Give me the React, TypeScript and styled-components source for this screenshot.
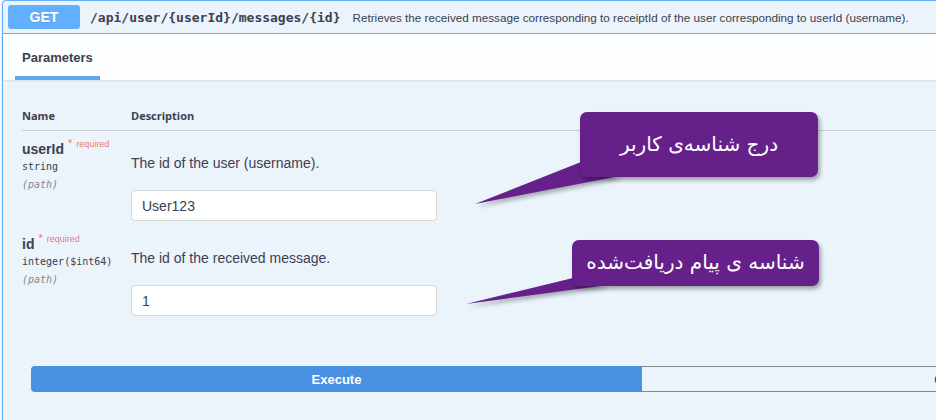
import React from "react";
import styled, { createGlobalStyle } from "styled-components";

const GlobalStyle = createGlobalStyle`
  html, body { margin: 0; padding: 0; background: #ffffff; overflow: hidden; }
  * { box-sizing: border-box; }
`;

const Page = styled.div`
  position: relative;
  width: 936px;
  height: 420px;
  overflow: hidden;
  background: #ffffff;
  font-family: "Liberation Sans", Arial, sans-serif;
  color: #3b4151;
`;

const Opblock = styled.div`
  margin-left: 2px;
  width: 1300px;
  height: 440px;
  border: 1px solid #61affe;
  border-radius: 4px;
  background: #ebf3fb;
  box-shadow: 0 0 3px rgba(0, 0, 0, 0.19);
`;

const Summary = styled.div`
  display: flex;
  align-items: center;
  height: 33px;
  padding-left: 5px;
  border-bottom: 1px solid #61affe;
`;

const Method = styled.span`
  display: flex;
  align-items: center;
  justify-content: center;
  width: 72px;
  height: 24px;
  border-radius: 3px;
  background: #61affe;
  color: #ffffff;
  font-weight: 700;
  font-size: 14px;
  text-shadow: 0 1px 0 rgba(0, 0, 0, 0.1);
`;

const Path = styled.span`
  margin-left: 10px;
  font-family: "DejaVu Sans Mono", monospace;
  font-weight: 700;
  font-size: 13px;
  color: #3b4151;
`;

const SummaryDesc = styled.span`
  margin-left: 12px;
  font-size: 11.7px;
  color: #3b4151;
`;

const TabBar = styled.div`
  display: flex;
  align-items: flex-end;
  height: 46px;
  padding-left: 12px;
  background: rgba(255, 255, 255, 0.85);
  box-shadow: 0 1px 2px rgba(0, 0, 0, 0.1);
`;

const Tab = styled.div`
  padding: 0 7px 10px;
  font-size: 13px;
  font-weight: 700;
  color: #3b4151;
  border-bottom: 4px solid #61a8ec;
  line-height: 16px;
`;

const Body = styled.div`
  padding: 20px 0 0 19px;
`;

const Table = styled.div`
  display: grid;
  grid-template-columns: 109px 1fr;
`;

const HeadCell = styled.div`
  height: 31px;
  padding-top: 9px;
  font-family: "Open Sans", sans-serif;
  font-size: 11px;
  line-height: 14px;
  font-weight: 700;
  color: #3b4151;
  border-bottom: 1px solid #c7cfd9;
`;

const NameCell = styled.div`
  padding: 9px 0 5px;
  display: flex;
  flex-direction: column;
`;

const DescCell = styled.div`
  padding: 9px 0 5px;
  display: flex;
  flex-direction: column;
  align-items: flex-start;
`;

const ParamName = styled.div`
  font-size: 14px;
  font-weight: 700;
  line-height: 18px;
  color: #3b4151;
  display: flex;
  align-items: flex-start;
`;

const Required = styled.span`
  margin-left: 4px;
  font-size: 9px;
  line-height: 12px;
  font-weight: 400;
  color: rgba(240, 30, 30, 0.65);
  margin-top: -3px;
`;

const Star = styled.span`
  font-size: 11px;
  margin-right: 4px;
`;

const ParamType = styled.div`
  font-family: "DejaVu Sans Mono", monospace;
  font-size: 10px;
  line-height: 18px;
  color: #3b4151;
`;

const ParamIn = styled.div`
  font-family: "DejaVu Sans Mono", monospace;
  font-style: italic;
  font-size: 10px;
  line-height: 18px;
  color: #888888;
`;

const DescText = styled.div`
  margin-top: 14px;
  font-size: 14px;
  line-height: 18px;
  color: #3b4151;
`;

const Input = styled.input`
  margin-top: 18px;
  width: 306px;
  height: 31px;
  padding: 0 10px;
  border: 1px solid #d9d9d9;
  border-radius: 4px;
  background: #ffffff;
  font-family: "Liberation Sans", Arial, sans-serif;
  font-size: 14px;
  color: #3b4151;
  outline: none;
  box-shadow: 0 0 1px rgba(0, 0, 0, 0.05);
`;

const ExecuteWrapper = styled.div`
  margin-top: 45px;
  padding-left: 9px;
  display: flex;
`;

const ExecuteBtn = styled.button`
  width: 611px;
  height: 26px;
  border: none;
  border-radius: 4px 0 0 4px;
  background: #4990e2;
  color: #ffffff;
  font-family: "Liberation Sans", Arial, sans-serif;
  font-weight: 700;
  font-size: 13px;
`;

const CancelBtn = styled.button`
  width: 628px;
  height: 26px;
  border: 1px solid #888888;
  border-left: none;
  border-radius: 0 4px 4px 0;
  background: transparent;
  color: #3b4151;
  font-family: "Liberation Sans", Arial, sans-serif;
  font-weight: 700;
  font-size: 13px;
`;

const Callout = styled.div<{ $left: number; $top: number }>`
  position: absolute;
  left: ${(p) => p.$left}px;
  top: ${(p) => p.$top}px;
`;

const Bubble = styled.div<{ $w: number; $h: number }>`
  position: relative;
  width: ${(p) => p.$w}px;
  height: ${(p) => p.$h}px;
  border-radius: 7px;
  background: #652189;
  box-shadow: 2px 3px 4px rgba(0, 0, 0, 0.35);
  color: #ffffff;
  display: flex;
  align-items: center;
  justify-content: center;
  padding-bottom: 2px;
  font-family: "DejaVu Sans", sans-serif;
  font-size: 20px;
  direction: rtl;
  z-index: 1;
`;

const Tail = styled.svg`
  position: absolute;
  overflow: visible;
  filter: drop-shadow(2px 3px 2px rgba(0, 0, 0, 0.3));
  z-index: 0;
`;

type CalloutProps = {
  left: number;
  top: number;
  w: number;
  h: number;
  text: string;
  tail: string;
};

const SpeechCallout = ({ left, top, w, h, text, tail }: CalloutProps) => (
  <Callout $left={left} $top={top}>
    <Tail width="1" height="1" style={{ left: 0, top: 0 }}>
      <polygon points={tail} fill="#652189" />
    </Tail>
    <Bubble $w={w} $h={h}>{text}</Bubble>
  </Callout>
);

export default function App() {
  return (
    <>
      <GlobalStyle />
      <Page>
        <Opblock>
          <Summary>
            <Method>GET</Method>
            <Path>/api/user/{"{userId}"}/messages/{"{id}"}</Path>
            <SummaryDesc>
              Retrieves the received message corresponding to receiptId of the user corresponding to userId (username).
            </SummaryDesc>
          </Summary>
          <TabBar>
            <Tab>Parameters</Tab>
          </TabBar>
          <Body>
            <Table>
              <HeadCell>Name</HeadCell>
              <HeadCell>Description</HeadCell>

              <NameCell>
                <ParamName>
                  userId
                  <Required>
                    <Star>*</Star>required
                  </Required>
                </ParamName>
                <ParamType>string</ParamType>
                <ParamIn>(path)</ParamIn>
              </NameCell>
              <DescCell>
                <DescText>The id of the user (username).</DescText>
                <Input defaultValue="User123" />
              </DescCell>

              <NameCell>
                <ParamName>
                  id
                  <Required>
                    <Star>*</Star>required
                  </Required>
                </ParamName>
                <ParamType>integer($int64)</ParamType>
                <ParamIn>(path)</ParamIn>
              </NameCell>
              <DescCell>
                <DescText>The id of the received message.</DescText>
                <Input defaultValue="1" />
              </DescCell>
            </Table>
            <ExecuteWrapper>
              <ExecuteBtn>Execute</ExecuteBtn>
              <CancelBtn>Cancel</CancelBtn>
            </ExecuteWrapper>
          </Body>
        </Opblock>

        <SpeechCallout
          left={580}
          top={112}
          w={238}
          h={65}
          text="درج شناسه‌ی کاربر"
          tail="1,50 40,64 -105,92"
        />
        <SpeechCallout
          left={572}
          top={240}
          w={247}
          h={46}
          text="شناسه ی پیام دریافت‌شده"
          tail="1,38 36,45 -106,64"
        />
      </Page>
    </>
  );
}
